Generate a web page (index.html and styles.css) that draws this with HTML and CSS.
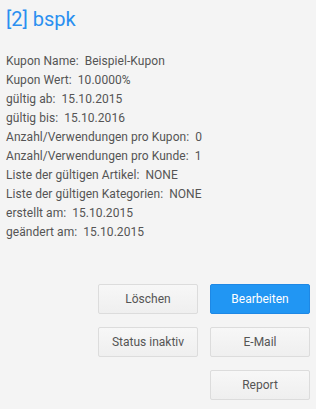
FILE: index.html
```html
<!DOCTYPE html>
<html>
<head>
    <title>Kupon</title>
    <meta name="viewport" content="width=device-width, initial-scale=1.0">
    <link rel="stylesheet" href="styles.css">
</head>
<body>
    <h1 class="title">[2] bspk</h1>
    <div class="details">
        <div class="row">Kupon Name:&nbsp; Beispiel-Kupon</div>
        <div class="row">Kupon Wert:&nbsp; 10.0000%</div>
        <div class="row">gültig ab:&nbsp; 15.10.2015</div>
        <div class="row">gültig bis:&nbsp; 15.10.2016</div>
        <div class="row">Anzahl/Verwendungen pro Kupon:&nbsp; 0</div>
        <div class="row">Anzahl/Verwendungen pro Kunde:&nbsp; 1</div>
        <div class="row">Liste der gültigen Artikel:&nbsp; NONE</div>
        <div class="row">Liste der gültigen Kategorien:&nbsp; NONE</div>
        <div class="row">erstellt am:&nbsp; 15.10.2015</div>
        <div class="row">geändert am:&nbsp; 15.10.2015</div>
    </div>
    <div class="actions">
        <button class="btn">Löschen</button>
        <button class="btn btn-primary">Bearbeiten</button>
        <button class="btn">Status inaktiv</button>
        <button class="btn">E-Mail</button>
        <button class="btn btn-last">Report</button>
    </div>
</body>
</html>
```

FILE: styles.css
```css
body {
    font-family: Roboto, 'Liberation Sans', sans-serif;
    margin: 0;
    padding: 0 6px;
    background-color: #f4f4f4;
    color: #555555;
}

.title {
    font-size: 20px;
    font-weight: 400;
    color: #2a8ff0;
    margin: 6px 0 0;
    line-height: 26px;
}

.details {
    margin-top: 20px;
    font-size: 12px;
    line-height: 19px;
    letter-spacing: 0.05px;
}

.actions {
    display: grid;
    grid-template-columns: 100px 100px;
    column-gap: 12px;
    row-gap: 13px;
    justify-content: end;
    margin: 42px 0 0;
}

.btn {
    height: 30px;
    width: 100px;
    border: 1px solid #dcdcdc;
    border-radius: 2px;
    background: linear-gradient(#f7f7f7, #efefef);
    color: #555555;
    font-family: Roboto, 'Liberation Sans', sans-serif;
    font-size: 12px;
    padding: 0;
    cursor: pointer;
}

.btn-primary {
    background: #2196f3;
    border-color: #1e88e5;
    color: #ffffff;
}

.btn-last {
    grid-column: 2;
}
```
